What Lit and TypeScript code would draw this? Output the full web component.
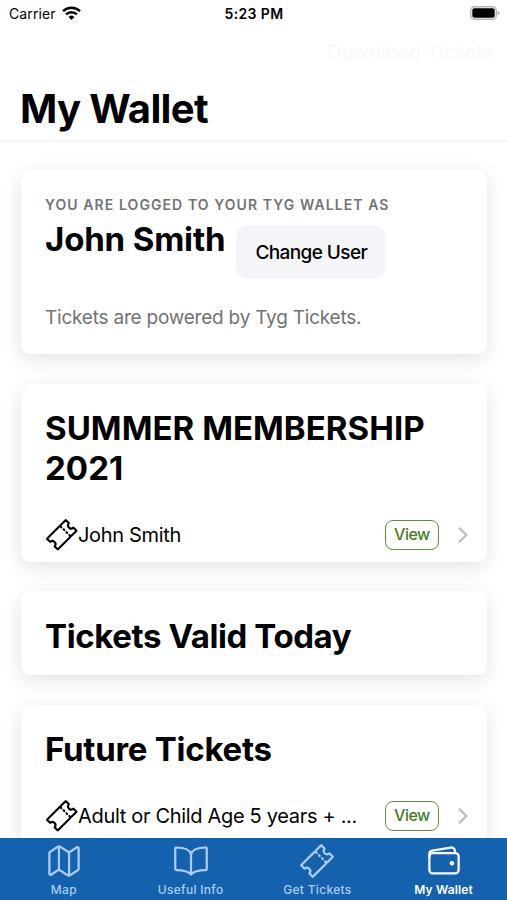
import { LitElement, html, css, svg } from "lit";
import { customElement, property } from "lit/decorators.js";

const icons: Record<string, unknown> = {
  ticket: svg`<path d="M366.05 146a46.7 46.7 0 01-2.42-63.42 3.87 3.87 0 00-.22-5.26l-44.13-44.18a3.89 3.89 0 00-5.5 0l-70.34 70.34a23.62 23.62 0 00-5.71 9.24 23.66 23.66 0 01-14.95 15 23.7 23.7 0 00-9.25 5.71L33.14 313.78a3.89 3.89 0 000 5.5l44.13 44.13a3.87 3.87 0 005.26.22 46.69 46.69 0 0165.84 65.84 3.87 3.87 0 00.22 5.26l44.13 44.13a3.89 3.89 0 005.5 0l180.4-180.39a23.7 23.7 0 005.71-9.25 23.66 23.66 0 0114.95-15 23.62 23.62 0 009.24-5.71l70.34-70.34a3.89 3.89 0 000-5.5l-44.13-44.13a3.87 3.87 0 00-5.26-.22 46.7 46.7 0 01-65.84-2.36z"/><path stroke-linecap="round" d="M250.5 140.44l-16.51-16.51M294.52 184.46l-11-11M338.54 228.49l-11-11M388.07 278.01l-16.51-16.51"/>`,
  map: svg`<path d="M313.27 124.64L198.73 51.36a32 32 0 00-29.28.35L56.51 127.49A16 16 0 0048 141.63v295.8a16 16 0 0023.49 14.14l97.82-63.79a32 32 0 0129.5-.24l111.86 73a32 32 0 0029.27-.11l115.43-75.94a16 16 0 008.63-14.2V74.57a16 16 0 00-23.49-14.14l-98 63.86a32 32 0 01-29.24.35zM328 128v336M184 384V48"/>`,
  book: svg`<path d="M256 160c16-63.16 76.43-95.41 208-96a15.94 15.94 0 0116 16v288a16 16 0 01-16 16c-128 0-177.45 25.81-208 64-30.37-38-80-64-208-64-9.88 0-16-8.05-16-17.93V80a15.94 15.94 0 0116-16c131.57.59 192 32.84 208 96zM256 160v288"/>`,
  wallet: svg`<rect x="48" y="144" width="416" height="288" rx="48" ry="48"/><path d="M411.36 144v-30A50 50 0 00352 64.9L88.64 109.85A50 50 0 0048 159v49"/><path fill="currentColor" stroke="none" d="M368 320a32 32 0 1132-32 32 32 0 01-32 32z"/>`,
};

@customElement("line-icon")
export class LineIcon extends LitElement {
  @property() name = "";
  static styles = css`
    :host { display: block; flex: none; width: 36px; height: 36px; }
    svg { display: block; width: 100%; height: 100%; overflow: visible; }
  `;
  render() {
    return html`<svg viewBox="0 0 512 512" fill="none" stroke="currentColor" stroke-width="32" stroke-linejoin="round">${icons[this.name]}</svg>`;
  }
}

@customElement("ticket-row")
export class TicketRow extends LitElement {
  @property() label = "";
  static styles = css`
    :host { display: flex; align-items: center; height: 54px; padding-right: 18px; color: #000; }
    line-icon { width: 33.5px; height: 33.5px; margin-left: -0.5px; }
    .label { flex: 1; font-size: 20px; letter-spacing: -0.32px; white-space: nowrap; }
    .view { box-sizing: border-box; width: 54px; height: 30px; border: 1.5px solid #5f8f39; border-radius: 8px; background: #fff; color: #467c1c; font: 500 16px/27px Inter, sans-serif; letter-spacing: -0.5px; padding: 0; text-align: center; }
    .chevron { display: block; width: 12px; height: 18px; margin-left: 18px; }
  `;
  render() {
    return html`
      <line-icon name="ticket"></line-icon>
      <span class="label">${this.label}</span>
      <button class="view">View</button>
      <svg class="chevron" viewBox="0 0 12 18" fill="none" stroke="#bdbdbd" stroke-width="2.2"><path d="M2 1.7 9.4 9 2 16.3"/></svg>
    `;
  }
}

const tabs = [
  { icon: "map", label: "Map" },
  { icon: "book", label: "Useful Info" },
  { icon: "ticket", label: "Get Tickets" },
  { icon: "wallet", label: "My Wallet", active: true },
];

@customElement("app-root")
export class AppRoot extends LitElement {
  static styles = css`
    :host { display: flex; flex-direction: column; height: 900px; overflow: hidden; background: #fff; color: #000; font-family: Inter, sans-serif; }
    h1, h2, p { margin: 0; }
    .status { display: grid; grid-template-columns: 1fr auto 1fr; align-items: center; height: 28px; padding: 0 7px 0 9px; font-size: 14px; }
    .carrier { display: flex; align-items: center; gap: 6px; margin-top: -2px; letter-spacing: 0.1px; }
    .wifi { width: 19px; height: 14px; margin-top: -1px; }
    .time { margin: -2px 1px 0 0; font-weight: 600; letter-spacing: 0.35px; }
    .battery { justify-self: end; width: 30px; height: 14px; margin-top: -2px; }
    .actions { height: 50px; padding: 0 14px; text-align: right; font-size: 20px; line-height: 48px; color: #f8f8f8; letter-spacing: -0.2px; }
    .header { box-sizing: border-box; flex: none; height: 64px; padding-left: 20px; border-bottom: 2px solid #f5f5f5; }
    h1 { font-size: 40px; line-height: 62px; font-weight: 700; letter-spacing: -0.65px; }
    .content { flex: 1; min-height: 0; overflow: hidden; padding: 28px 20px 0 21px; display: flex; flex-direction: column; gap: 29.5px; }
    .card { box-sizing: border-box; flex: none; padding-left: 24px; background: #fff; border-radius: 9px; box-shadow: 0 5px 20px rgba(0, 0, 0, 0.115); }
    .account { height: 184px; padding-top: 26px; }
    .membership { height: 178px; padding-top: 24.5px; }
    .today { height: 84px; padding-top: 24.5px; }
    .future { height: 186px; padding-top: 24.5px; }
    .eyebrow { font-size: 14px; line-height: 18px; font-weight: 600; letter-spacing: 1.08px; color: #737373; }
    .user { display: flex; align-items: flex-start; gap: 11px; margin-top: 11px; }
    .name { margin-top: -6px; letter-spacing: -0.15px; }
    .change { margin: 0; padding: 1px 0 0; width: 150px; height: 54px; border: 0; border-radius: 12px; background: #f4f5f9; color: #000; font: 500 19px/53px Inter, sans-serif; letter-spacing: -0.6px; }
    h2 { font-size: 33px; line-height: 40px; font-weight: 700; letter-spacing: -0.4px; }
    .membership h2 { letter-spacing: 0.05px; }
    .future h2 { letter-spacing: -0.25px; }
    .note { margin-top: 26px; padding-top: 1px; font-size: 19px; line-height: 24px; color: #737373; letter-spacing: -0.22px; }
    .membership ticket-row { margin-top: 19.5px; }
    .future ticket-row { margin-top: 19.5px; }
    .tabs { flex: none; display: grid; grid-template-columns: repeat(4, 1fr); height: 62px; background: #1461ae; color: #a9cdf3; z-index: 1; }
    .tab { display: flex; flex-direction: column; align-items: center; padding: 5px 0 0 1px; font-size: 12px; line-height: 14px; font-weight: 500; letter-spacing: 0.3px; gap: 4px; }
    .active { padding-left: 0; color: #fff; font-weight: 600; letter-spacing: 0.15px; }
  `;
  render() {
    return html`
      <div class="status">
        <div class="carrier">
          <span>Carrier</span>
          <svg class="wifi" viewBox="0 0 19 14" fill="none" stroke="#000" stroke-width="2.5">
            <path d="M1 5.1a12.2 12.2 0 0 1 17 0M4 8.4a7.8 7.8 0 0 1 11 0"/>
            <path d="M6.6 10.9a4.2 4.2 0 0 1 5.8 0L9.5 14z" fill="#000" stroke="none"/>
          </svg>
        </div>
        <span class="time">5:23 PM</span>
        <svg class="battery" viewBox="0 0 30 14">
          <rect x=".7" y=".7" width="25.6" height="12.6" rx="3.8" fill="#fff" stroke="#b5b5b5" stroke-width="1.4"/>
          <rect x="2.3" y="2.3" width="22.4" height="9.4" rx="2"/>
          <path d="M27.6 4.7q2 1 2 2.3t-2 2.3z" fill="#b0b0b0"/>
        </svg>
      </div>
      <div class="actions">Download Tickets</div>
      <div class="header"><h1>My Wallet</h1></div>
      <main class="content">
        <section class="card account">
          <p class="eyebrow">YOU ARE LOGGED TO YOUR TYG WALLET AS</p>
          <div class="user"><h2 class="name">John Smith</h2><button class="change">Change User</button></div>
          <p class="note">Tickets are powered by Tyg Tickets.</p>
        </section>
        <section class="card membership">
          <h2>SUMMER MEMBERSHIP<br />2021</h2>
          <ticket-row label="John Smith"></ticket-row>
        </section>
        <section class="card today"><h2>Tickets Valid Today</h2></section>
        <section class="card future">
          <h2>Future Tickets</h2>
          <ticket-row label="Adult or Child Age 5 years + ..."></ticket-row>
        </section>
      </main>
      <nav class="tabs">
        ${tabs.map((t) => html`<div class="tab ${t.active ? "active" : ""}"><line-icon name=${t.icon}></line-icon><span>${t.label}</span></div>`)}
      </nav>
    `;
  }
}
